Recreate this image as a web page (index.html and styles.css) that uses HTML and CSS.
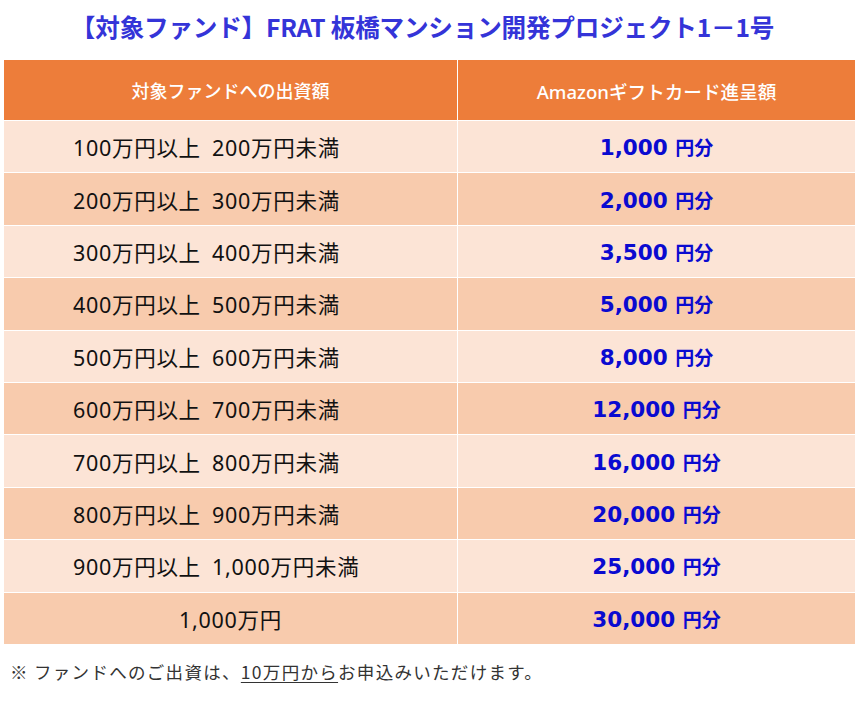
FILE: index.html
```html
<!DOCTYPE html>
<html lang="ja">
<head>
<meta charset="utf-8">
<link rel="stylesheet" href="styles.css">
</head>
<body>
<div class="page">
  <h1 class="title">【対象ファンド】FRAT 板橋マンション開発プロジェクト1－1号</h1>
  <table class="gift">
    <thead>
      <tr><th class="col-a">対象ファンドへの出資額</th><th class="col-b">Amazonギフトカード進呈額</th></tr>
    </thead>
    <tbody>
      <tr><td class="range">100万円以上 200万円未満</td><td class="amt">1,000 <span class="yen">円分</span></td></tr>
      <tr><td class="range">200万円以上 300万円未満</td><td class="amt">2,000 <span class="yen">円分</span></td></tr>
      <tr><td class="range">300万円以上 400万円未満</td><td class="amt">3,500 <span class="yen">円分</span></td></tr>
      <tr><td class="range">400万円以上 500万円未満</td><td class="amt">5,000 <span class="yen">円分</span></td></tr>
      <tr><td class="range">500万円以上 600万円未満</td><td class="amt">8,000 <span class="yen">円分</span></td></tr>
      <tr><td class="range">600万円以上 700万円未満</td><td class="amt">12,000 <span class="yen">円分</span></td></tr>
      <tr><td class="range">700万円以上 800万円未満</td><td class="amt">16,000 <span class="yen">円分</span></td></tr>
      <tr><td class="range">800万円以上 900万円未満</td><td class="amt">20,000 <span class="yen">円分</span></td></tr>
      <tr><td class="range">900万円以上 1,000万円未満</td><td class="amt">25,000 <span class="yen">円分</span></td></tr>
      <tr><td class="range center">1,000万円</td><td class="amt">30,000 <span class="yen">円分</span></td></tr>
    </tbody>
  </table>
  <p class="note">※ ファンドへのご出資は、<span class="ul">10万円から</span>お申込みいただけます。</p>
</div>
</body>
</html>
```
FILE: styles.css
```css
html, body {
  margin: 0;
  padding: 0;
  background: #ffffff;
}
.page {
  padding: 0 7px 0 4px;
  font-family: "Noto Sans", "Noto Sans CJK JP", sans-serif;
}
.title {
  margin: 0;
  padding: 10px 14px 0 0;
  height: 60px;
  box-sizing: border-box;
  text-align: center;
  font-size: 24.6px;
  line-height: 32px;
  font-weight: 700;
  color: #3434d8;
  font-family: "Noto Sans CJK JP", sans-serif;
  letter-spacing: -0.2px;
}
.gift {
  width: 851px;
  border-collapse: collapse;
  table-layout: fixed;
}
.gift th, .gift td {
  border: 1px solid #ffffff;
  padding: 0;
}
.gift tr:first-child th { border-top: 0; }
.gift th:first-child, .gift td:first-child { border-left: 0; }
.gift th:last-child, .gift td:last-child { border-right: 0; }
.gift tbody tr:last-child td { border-bottom: 0; }
.col-a { width: 453px; }
.gift th {
  background: #ed7d3a;
  color: #ffffff;
  height: 60px;
  font-size: 18px;
  font-weight: 500;
  font-family: "Noto Sans CJK JP", sans-serif;
  text-align: center;
}
.gift th.col-b {
  font-family: "Noto Sans", "Noto Sans CJK JP", sans-serif;
  font-size: 18.6px;
  font-weight: 500;
}
.gift td {
  height: 51.4px;
  font-size: 21.5px;
}
.gift tbody tr:nth-child(odd) td { background: #fce4d6; }
.gift tbody tr:nth-child(even) td { background: #f8cbad; }
.range {
  color: #111111;
  padding-left: 69px !important;
  text-align: left;
  word-spacing: 5px;
  letter-spacing: 0.7px;
}
.range.center {
  padding-left: 0 !important;
  text-align: center;
}
.amt {
  color: #0a0ad0;
  font-weight: 700;
  text-align: center;
  font-size: 22px;
  font-family: "DejaVu Sans", "Noto Sans CJK JP", sans-serif;
}
.yen {
  font-size: 19px;
  font-family: "Noto Sans CJK JP", sans-serif;
}
.note {
  margin: 15px 0 0 6px;
  font-family: "Noto Sans CJK JP", sans-serif;
  font-size: 17.5px;
  color: #333333;
  letter-spacing: 1.3px;
  line-height: 26px;
}
.ul {
  text-decoration: underline;
  text-underline-offset: 3px;
}
```
